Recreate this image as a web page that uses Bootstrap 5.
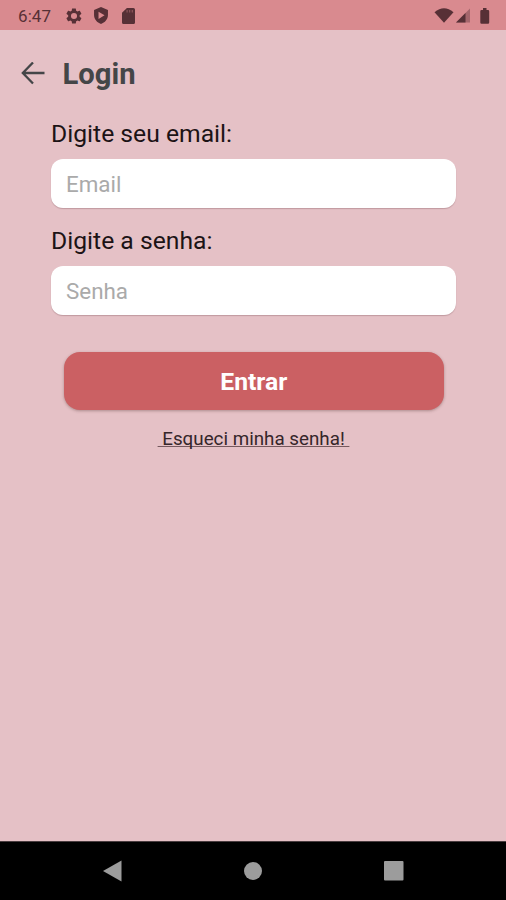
<!DOCTYPE html>
<html lang="pt-BR">
<head>
<meta charset="utf-8">
<meta name="viewport" content="width=device-width, initial-scale=1">
<title>Login</title>
<link href="https://cdn.jsdelivr.net/npm/bootstrap@5.3.0/dist/css/bootstrap.min.css" rel="stylesheet">
<style>
body{font-family:Roboto,"Liberation Sans",sans-serif;background:#e5c1c6;color:#1c1315}
svg{display:block;flex:none}
.screen{height:900px;overflow:hidden}
.status{height:30px;background:#d98a8f;color:#573036;padding:1px 16px 0 18px}
.clock{font-size:17px;line-height:30px;letter-spacing:.1px;width:48px}
.sdcard{margin-left:2px}
.wifi{margin-right:2px}
.battery{margin-left:10px}
.appbar{height:88px;padding:0 21px;color:#444648}
.appbar h1{font-size:29.2px;line-height:34px;font-weight:700;margin-left:17.5px}
.login-form{padding:0 50px 0 51px}
.form-label{font-size:24.7px;line-height:32px;height:33px}
.label-next{margin-top:17px}
.form-control,.form-control:focus{height:49px;border:0;border-radius:12px;padding:0 15px;font-size:22.4px;color:#333;background:#fff;box-shadow:0 1px 1px rgba(100,55,60,.28)}
.form-control::placeholder{color:#aaa;opacity:1}
.btn-enter,.btn-enter:hover{height:58px;margin:37px 12.5px 16px 13px;padding-top:8px;border:0;border-radius:16px;background:#cb6063;color:#fff;font-size:24.7px;font-weight:700;line-height:30px;box-shadow:0 1px 3px rgba(80,50,45,.38)}
.forgot{font-size:18.8px;line-height:26px;color:#35262a;white-space:pre;text-decoration-thickness:1px;text-decoration-color:#75595e;text-decoration-skip-ink:none;text-underline-offset:1px}
.forgot:hover{color:#35262a}
.navkeys{height:59px;padding:0 102.5px 0 103px;border-top:1px solid #4a3d40;background:#000}
.navkeys svg{fill:#9c9c9c}
</style>
<script src="https://cdn.jsdelivr.net/npm/bootstrap@5.3.0/dist/js/bootstrap.bundle.min.js"></script>
</head>
<body>
<div class="screen d-flex flex-column">
  <div class="status d-flex align-items-center justify-content-between">
    <div class="d-flex align-items-center">
      <span class="clock">6:47</span>
      <svg width="16" height="16" viewBox="1.500 1.500 21 21" fill="currentColor"><path fill-rule="evenodd" d="M19.400 13c.1-.7.1-1.300 0-2l2.100-1.700c.2-.1.200-.4.100-.6l-2-3.500c-.1-.2-.4-.3-.6-.2l-2.500 1c-.5-.4-1.100-.7-1.700-1l-.4-2.600c0-.2-.2-.4-.5-.4h-4c-.2 0-.4.2-.5.400L9 5c-.6.300-1.200.6-1.700 1l-2.500-1c-.2-.1-.5 0-.6.200l-2 3.500c-.1.200-.1.500.1.600L4.400 11c-.1.700-.1 1.300 0 2l-2.100 1.700c-.2.100-.2.400-.1.600l2 3.500c.1.200.4.300.6.200l2.500-1c.5.400 1.100.7 1.700 1l.4 2.600c.1.200.3.400.5.400h4c.3 0 .5-.2.500-.4l.4-2.600c.6-.3 1.200-.6 1.700-1l2.500 1c.2.100.5 0 .6-.2l2-3.500c.1-.2.100-.5-.1-.6zM12 16a4 4 0 1 1 0-8 4 4 0 0 1 0 8z"/></svg>
      <svg class="ms-2 me-2 px-1" width="22" height="17" viewBox="3 1 18 22" fill="currentColor"><path fill-rule="evenodd" d="M12 1 3 5v6.500C3 17 7 21.500 12 23c5-1.500 9-6 9-11.500V5zM8.800 7l7.800 4.700L8.800 16.400z"/></svg>
      <svg class="sdcard" width="13" height="16" viewBox="4 2 16 20" preserveAspectRatio="none" fill="currentColor"><path d="M18 2h-8L4 8v12c0 1.100.9 2 2 2h12c1.100 0 2-.9 2-2V4c0-1.100-.9-2-2-2z"/><path fill="#d98a8f" opacity=".4" d="M9.500 4.500H11v3H9.500zm3.200 0h1.500v3h-1.500zm3.200 0h1.600v3h-1.600z"/></svg>
    </div>
    <div class="d-flex align-items-center">
      <svg class="wifi" width="20" height="15" viewBox="0 0 20 15" fill="currentColor"><path d="M.5 4.200Q10-3.800 19.500 4.200L10 14.800z"/></svg>
      <svg width="14" height="15" viewBox="0 0 14 15" fill="currentColor"><path opacity=".4" d="M14 .5v14H0z"/><path d="M9.500 5v9.500H0z"/></svg>
      <svg class="battery" width="10" height="16" viewBox="0 0 10 16" fill="currentColor"><path d="M3 0h3.500v2h1.500q1.200 0 1.200 1.200v11.300q0 1.300-1.200 1.300H1.500Q.3 15.800.3 14.500V3.200Q.3 2 1.500 2H3z"/></svg>
    </div>
  </div>
  <header class="appbar d-flex align-items-center">
    <svg width="24" height="24" viewBox="0 0 24 24" fill="none" stroke="currentColor" stroke-width="2.300"><path d="M12 .5 1.800 11 12 21.500M2 11h21.500"/></svg>
    <h1 class="mb-0">Login</h1>
  </header>
  <form class="login-form d-flex flex-column" onsubmit="return false">
    <label class="form-label mb-0" for="email">Digite seu email:</label>
    <input class="form-control mt-2" id="email" type="email" placeholder="Email">
    <label class="form-label label-next mb-0" for="senha">Digite a senha:</label>
    <input class="form-control mt-2" id="senha" type="password" placeholder="Senha">
    <button class="btn btn-enter" type="submit">Entrar</button>
    <a class="forgot align-self-center" href="#"> Esqueci minha senha! </a>
  </form>
  <nav class="navkeys mt-auto d-flex align-items-center justify-content-between">
    <svg width="19" height="22" viewBox="0 0 19 22"><path d="M0 11 18.500.5v21z"/></svg>
    <svg width="18" height="18" viewBox="0 0 18 18"><circle cx="9" cy="9" r="9"/></svg>
    <svg width="20" height="20" viewBox="0 0 20 20"><rect width="19.500" height="19.500" rx="1"/></svg>
  </nav>
</div>
</body>
</html>
